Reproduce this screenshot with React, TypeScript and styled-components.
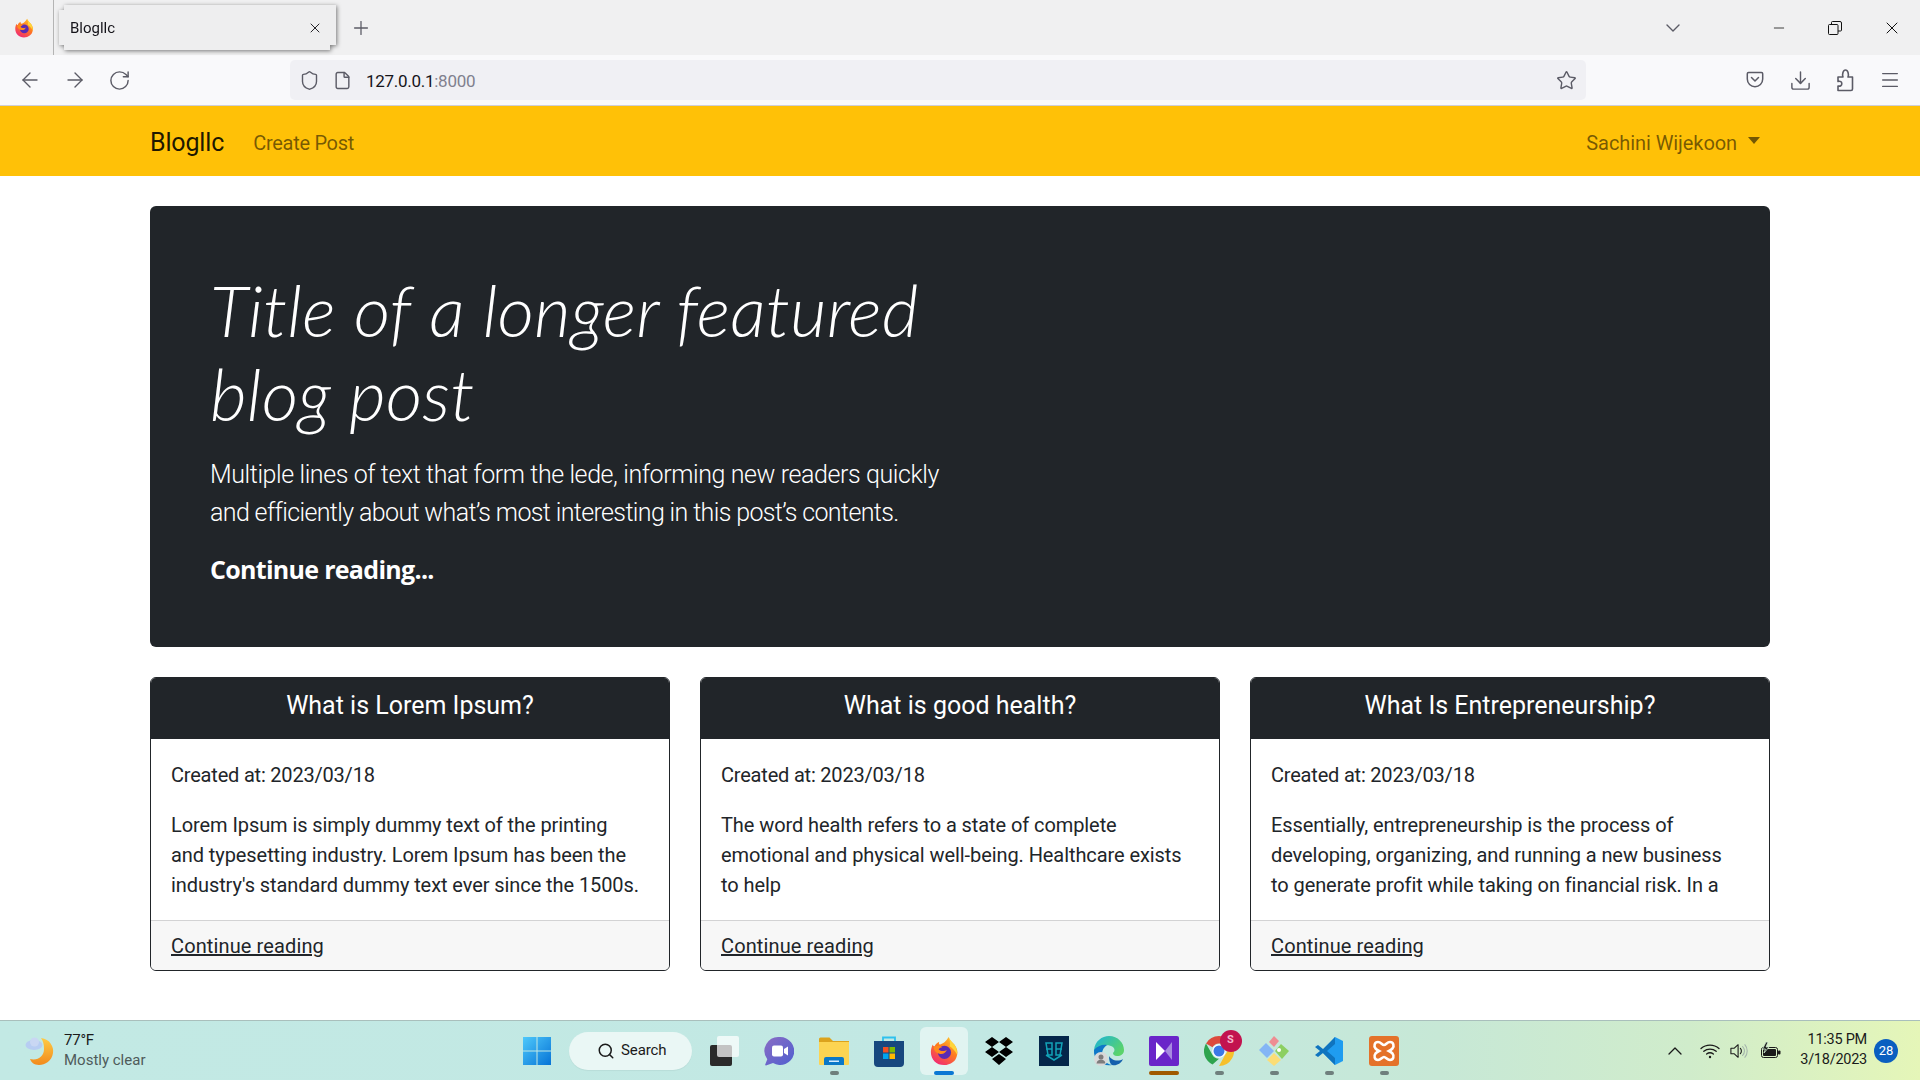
import styled, { createGlobalStyle } from 'styled-components';
import {
  ArrowLeft,
  ArrowRight,
  ChevronDown,
  ChevronUp,
  Download,
  File,
  Menu,
  Minus,
  Plus,
  RotateCw,
  Search,
  Shield,
  Star,
  X,
} from 'lucide-react';

const GlobalStyle = createGlobalStyle`
  html, body {
    height: 100%;
    margin: 0;
  }

  body {
    background: #fff;
    color: #212529;
    font-family: Roboto, "Liberation Sans", sans-serif;
    font-size: 20px;
    line-height: 1.5;
    overflow: hidden;
  }
`;

const Screen = styled.div`
  display: flex;
  flex-direction: column;
  height: 1080px;
  width: 1920px;
`;

/* browser chrome */

const TabStrip = styled.div`
  align-items: center;
  background: #f0f0f1;
  display: flex;
  height: 55px;
`;

const AppSlot = styled.div`
  align-items: center;
  border-right: 1px solid #b4b4b4;
  box-sizing: border-box;
  display: flex;
  height: 55px;
  justify-content: center;
  padding-right: 5px;
  width: 54px;
`;

const TabShadow = styled.div`
  align-self: flex-start;
  filter: drop-shadow(1px 1px 2px rgba(0, 0, 0, 0.5));
  margin-left: 5px;
  margin-top: 5px;
`;

const Tab = styled.div`
  align-items: center;
  background: #eeeeef;
  box-sizing: border-box;
  clip-path: polygon(0 5px, 5px 5px, 5px 0, 277px 0, 277px 40px, 271px 40px, 271px 45px, 5px 45px, 5px 40px, 0 40px);
  color: #15141a;
  display: flex;
  font-size: 15px;
  height: 45px;
  justify-content: space-between;
  padding: 0 13px 0 11px;
  width: 277px;
`;

const TabTitle = styled.span`
  margin-top: 2px;
`;

const NewTab = styled.div`
  color: #5b5b66;
  display: flex;
  margin-left: 14px;
`;

const WindowControls = styled.div`
  align-items: center;
  display: flex;
  margin-left: auto;
`;

const ListTabs = styled.div`
  color: #5b5b66;
  display: flex;
  margin-right: 66px;
`;

const WindowButton = styled.div`
  align-items: center;
  color: #111;
  display: flex;
  justify-content: center;
  width: 56.5px;
`;

const Toolbar = styled.div`
  align-items: center;
  background: #f9f9fb;
  border-bottom: 1px solid #cfcfd8;
  box-sizing: border-box;
  color: #5b5b66;
  display: flex;
  height: 51px;
`;

const NavButtons = styled.div`
  align-items: center;
  display: flex;
  gap: 21px;
  padding-left: 18px;
  width: 272px;
`;

const UrlBar = styled.div`
  align-items: center;
  background: #f0f0f4;
  border-radius: 5px;
  box-sizing: border-box;
  display: flex;
  height: 40px;
  padding: 0 9px;
  width: 1296px;
`;

const PageIcon = styled.span`
  display: flex;
  margin-left: 13px;
`;

const UrlText = styled.span`
  color: #15141a;
  font-size: 17px;
  letter-spacing: -0.28px;
  margin-left: 14px;
  margin-top: 3px;
`;

const UrlPort = styled.span`
  color: #80808e;
`;

const StarSlot = styled.span`
  display: flex;
  margin-left: auto;
`;

const ToolbarActions = styled.div`
  align-items: center;
  display: flex;
  margin-left: 146.5px;
`;

const ToolbarAction = styled.span`
  align-items: center;
  display: flex;
  justify-content: center;
  width: 45px;
`;

/* page */

const Navbar = styled.nav`
  align-items: center;
  background: #ffc107;
  box-sizing: border-box;
  display: flex;
  flex: none;
  height: 70px;
  padding: 4px 150px 0;
`;

const Brand = styled.a`
  color: rgba(0, 0, 0, 0.9);
  font-size: 25px;
  letter-spacing: -0.15px;
`;

const NavLink = styled.a`
  color: rgba(0, 0, 0, 0.55);
  font-size: 20px;
  letter-spacing: -0.28px;
  margin-left: 29px;
`;

const UserMenu = styled(NavLink)`
  align-items: center;
  display: flex;
  letter-spacing: -0.08px;
  margin-left: auto;
  margin-right: 10px;

  &::after {
    border-left: 6px solid transparent;
    border-right: 6px solid transparent;
    border-top: 7px solid rgba(0, 0, 0, 0.55);
    content: '';
    margin-bottom: 6px;
    margin-left: 11px;
  }
`;

const Main = styled.main`
  display: flex;
  flex: 1;
  flex-direction: column;
  gap: 30px;
  padding: 30px 150px 0;
`;

const Hero = styled.section`
  background: #212529;
  border-radius: 6px;
  box-sizing: border-box;
  color: #fff;
  height: 441px;
  padding: 62px 60px 0;
`;

const HeroCopy = styled.div`
  width: 750px;
`;

const HeroTitle = styled.h1`
  font-family: Lato, Roboto, sans-serif;
  font-size: 71px;
  font-style: italic;
  font-weight: 300;
  letter-spacing: 0.1px;
  line-height: 84px;
  margin: 0 0 20px;
`;

const Lede = styled.p`
  font-size: 25px;
  font-weight: 300;
  line-height: 37.5px;
  margin: 0 0 20px;
`;

const LedeLine = styled.span<{ $tracking: number }>`
  display: block;
  letter-spacing: ${(p) => p.$tracking}px;
  white-space: nowrap;
`;

const HeroLink = styled.a`
  color: #fff;
  display: block;
  font-family: "Open Sans", Roboto, sans-serif;
  font-size: 25px;
  font-weight: 700;
  letter-spacing: -0.7px;
  line-height: 37.5px;
`;

const CardGrid = styled.div`
  display: grid;
  gap: 30px;
  grid-template-columns: repeat(3, 1fr);
`;

const Card = styled.article`
  border: 1px solid #212529;
  border-radius: 6px;
  display: flex;
  flex-direction: column;
  height: 292px;
  overflow: hidden;
`;

const CardHeader = styled.h4`
  background: #212529;
  color: #fff;
  font-size: 25px;
  font-weight: 400;
  line-height: 30px;
  margin: 0;
  padding: 13px 20px 18px;
  text-align: center;
`;

const CardBody = styled.div`
  flex: 1;
  letter-spacing: -0.08px;
  padding: 21px 28px 0 20px;
`;

const CreatedLine = styled.p`
  letter-spacing: -0.2px;
  margin: 0 0 20px;
`;

const CardText = styled.p`
  margin: 0;
`;

const CardFooter = styled.div`
  background: #f7f7f7;
  border-top: 1px solid #d3d3d4;
  padding: 10px 20px 9px;
`;

const FooterLink = styled.a`
  color: #212529;
  letter-spacing: 0.12px;
  text-decoration: underline;
`;

/* taskbar */

const Taskbar = styled.footer`
  align-items: center;
  background: linear-gradient(90deg, #c2e9e4 0%, #c2e8e3 55%, #c7e8d6 75%, #d0eccb 88%, #e5f6b8 100%);
  border-top: 1px solid #a9bfbc;
  box-sizing: border-box;
  display: flex;
  flex: none;
  height: 60px;
  padding-left: 24px;
`;

const Weather = styled.div`
  align-items: center;
  display: flex;
  gap: 10px;
  width: 485.5px;
`;

const WeatherText = styled.div`
  color: #1a1a1a;
  font-size: 15px;
  letter-spacing: -0.2px;
  line-height: 20px;
  margin-top: -2px;
`;

const Muted = styled.div`
  color: #4f5b5a;
  letter-spacing: 0;
`;

const Slot = styled.div<{ $active?: boolean }>`
  align-items: center;
  background: ${(p) => (p.$active ? 'rgba(255, 255, 255, 0.5)' : 'transparent')};
  border-radius: 6px;
  display: flex;
  height: 48px;
  justify-content: center;
  margin: ${(p) => (p.$active ? '0 3.5px' : '0')};
  position: relative;
  width: ${(p) => (p.$active ? '48px' : '55px')};
`;

const Indicator = styled.span<{ $color: string; $width: number }>`
  background: ${(p) => p.$color};
  border-radius: 2px;
  bottom: 0;
  height: 4px;
  left: 50%;
  margin-left: ${(p) => -p.$width / 2}px;
  position: absolute;
  width: ${(p) => p.$width}px;
`;

const SearchPill = styled.div`
  align-items: center;
  background: #eaf7f5;
  border-radius: 19px;
  box-shadow: 0 1px 1px rgba(0, 0, 0, 0.05);
  box-sizing: border-box;
  color: #1a1a1a;
  display: flex;
  font-size: 15px;
  gap: 6px;
  height: 38px;
  letter-spacing: -0.1px;
  margin: 0 4.5px;
  padding-left: 28px;
  width: 123px;
`;

const Tray = styled.div`
  align-items: center;
  color: #1a1a1a;
  display: flex;
  margin-left: auto;
  padding-right: 22px;
`;

const TrayIcons = styled.div`
  align-items: center;
  display: flex;
  margin-right: 8px;
`;

const TrayIcon = styled.span<{ $width: number }>`
  display: flex;
  justify-content: center;
  width: ${(p) => p.$width}px;
`;

const Clock = styled.div`
  font-size: 14.5px;
  letter-spacing: -0.25px;
  line-height: 20px;
  margin-top: -2px;
  text-align: right;
`;

const Badge = styled.span`
  align-items: center;
  background: #0a5fc0;
  border-radius: 50%;
  color: #fff;
  display: flex;
  font-size: 13px;
  height: 24px;
  justify-content: center;
  margin-left: 7px;
  width: 24px;
`;

const ProfileBadge = styled.span`
  align-items: center;
  background: #c2134f;
  border-radius: 50%;
  color: #f6b8cd;
  display: flex;
  font-size: 11px;
  font-weight: 700;
  height: 22px;
  justify-content: center;
  position: absolute;
  right: 5px;
  top: 3px;
  width: 22px;
`;

const posts = [
  {
    title: 'What is Lorem Ipsum?',
    text: "Lorem Ipsum is simply dummy text of the printing and typesetting industry. Lorem Ipsum has been the industry's standard dummy text ever since the 1500s.",
  },
  {
    title: 'What is good health?',
    text: 'The word health refers to a state of complete emotional and physical well-being. Healthcare exists to help',
  },
  {
    title: 'What Is Entrepreneurship?',
    text: 'Essentially, entrepreneurship is the process of developing, organizing, and running a new business to generate profit while taking on financial risk. In a',
  },
];

const Firefox = ({ size, id }: { size: number; id: string }) => (
  <svg width={size} height={size} viewBox="0 0 32 32">
    <defs>
      <linearGradient id={id} x1="0.8" y1="0" x2="0.2" y2="1">
        <stop offset="0" stopColor="#ffc22e" />
        <stop offset="0.45" stopColor="#ff7a1e" />
        <stop offset="1" stopColor="#f0247a" />
      </linearGradient>
    </defs>
    <path
      d="M21 1c1 3 3 5 6 8 3 4 4 8 3 11-1 7-7 11-14 11C8 31 2 25 2 17c0-3 1-6 2-8 0 1 1 2 2 2 1-3 3-4 5-5-1 2 0 3 1 3 3-1 6-3 9-8z"
      fill={`url(#${id})`}
    />
    <path d="M21 1c1 3 3 5 6 8 3 4 3 8 3 11-2-4-5-7-8-9 1-3 0-7-1-10z" fill="#ffd43a" />
    <circle cx="16.5" cy="17.5" r="7" fill="#5a2bb3" />
    <path d="M5 12c3-2 6-2 9 0-2 0-3 1-4 2 2 2 6 3 9 1-1 3-4 5-8 4-4-1-6-4-6-7z" fill="#ff8a1d" />
  </svg>
);

const Pocket = () => (
  <svg width="20" height="20" viewBox="0 0 20 20" fill="none" stroke="#5b5b66" strokeWidth="1.5">
    <path d="M3.5 2.5h13a1.2 1.2 0 0 1 1.2 1.2V9a7.7 7.7 0 0 1-15.4 0V3.7a1.2 1.2 0 0 1 1.2-1.2z" />
    <path d="M6.5 7.5 10 11l3.5-3.5" strokeLinecap="round" strokeLinejoin="round" />
  </svg>
);

const Extensions = () => (
  <svg width="20" height="24" viewBox="0 0 20 24" fill="none" stroke="#5b5b66" strokeWidth="1.6" strokeLinejoin="round">
    <path d="M3 22.500V18c2.400.6 3.800-.6 3.800-2.300S5.400 12.800 3 13.500V9h5C7 6.500 8 2 10.500 2s3.500 4.500 2.500 7h4.500v12a1.500 1.500 0 0 1-1.500 1.500z" />
  </svg>
);

const Restore = () => (
  <svg width="14" height="14" viewBox="0 0 14 14" fill="none" stroke="#111" strokeWidth="1">
    <rect x="0.5" y="3.500" width="9.500" height="10" rx="1" />
    <path d="M3.500 3.500V1.500a1 1 0 0 1 1-1h7.500a1.500 1.500 0 0 1 1.500 1.500v7a1 1 0 0 1-1 1H10" />
  </svg>
);

const WeatherIcon = () => (
  <svg width="30" height="30" viewBox="0 0 30 30">
    <defs>
      <linearGradient id="moon" x1="0" y1="0" x2="0" y2="1">
        <stop offset="0" stopColor="#ffcb45" />
        <stop offset="1" stopColor="#f28a1c" />
      </linearGradient>
    </defs>
    <path d="M17 2C26 3 30 11 29 17 28 25 21 29 15 29 10 29 7 26 6 23 14 25 20 20 20 13 20 8 19 5 17 2z" fill="url(#moon)" />
    <ellipse cx="10" cy="9" rx="8.500" ry="5" fill="#b7cdf2" />
    <circle cx="10.500" cy="6" r="4.500" fill="#c9d7f3" />
  </svg>
);

const WindowsLogo = () => (
  <svg width="30" height="30" viewBox="0 0 30 30">
    <defs>
      <linearGradient id="win" x1="0" y1="0" x2="1" y2="1">
        <stop offset="0" stopColor="#4fc9fb" />
        <stop offset="1" stopColor="#0673d6" />
      </linearGradient>
    </defs>
    <path d="M1 1h13.500v13.500H1zM15.500 1H29v13.500H15.500zM1 15.500h13.500V29H1zM15.500 15.500H29V29H15.500z" fill="url(#win)" />
  </svg>
);

const TaskView = () => (
  <svg width="32" height="32" viewBox="0 0 32 32">
    <rect x="2" y="10" width="22" height="21" rx="2" fill="#2a2a2a" />
    <rect x="9" y="1" width="22" height="21" rx="2" fill="#fff" fillOpacity="0.72" />
  </svg>
);

const Meet = () => (
  <svg width="30" height="30" viewBox="0 0 30 30">
    <defs>
      <linearGradient id="meet" x1="0" y1="0" x2="1" y2="1">
        <stop offset="0" stopColor="#8a6cc4" />
        <stop offset="1" stopColor="#4f5fd0" />
      </linearGradient>
    </defs>
    <path d="M16 1a14 14 0 1 1-7 26l-7 2.500c-.8 0-1-.6-.7-1.200l2-5A14 14 0 0 1 16 1z" fill="url(#meet)" />
    <rect x="8" y="9.500" width="11" height="11" rx="2" fill="#fff" />
    <path d="m20 13 4-2.500v9L20 17z" fill="#fff" />
  </svg>
);

const Folder = () => (
  <svg width="30" height="30" viewBox="0 0 30 30">
    <path d="M0 3a1.500 1.500 0 0 1 1.500-1.500h9L14 5h16v4H0z" fill="#dca31d" />
    <path d="M0 6h30v22a1 1 0 0 1-1 1H1a1 1 0 0 1-1-1z" fill="#fcd452" />
    <path d="M5 23a2 2 0 0 1 2-2h16a2 2 0 0 1 2 2v6H5z" fill="#0a78c8" />
    <rect x="10" y="24.500" width="10" height="1.500" fill="#d6ecff" />
  </svg>
);

const Store = () => (
  <svg width="30" height="32" viewBox="0 0 30 32">
    <path d="M9 7V2.500h12V7" fill="none" stroke="#2ec1ee" strokeWidth="1.800" />
    <path d="M0 6h30v22a4 4 0 0 1-4 4H4a4 4 0 0 1-4-4z" fill="#17477e" />
    <rect x="9" y="12" width="5.500" height="5.500" fill="#f25022" />
    <rect x="15.500" y="12" width="5.500" height="5.500" fill="#7fba00" />
    <rect x="9" y="18.500" width="5.500" height="5.500" fill="#00a4ef" />
    <rect x="15.500" y="18.500" width="5.500" height="5.500" fill="#ffb900" />
  </svg>
);

const Dropbox = () => (
  <svg width="30" height="30" viewBox="0 0 30 30" fill="#000">
    <path d="m8 1 7 5-7 5-7-5zM22 1l7 5-7 5-7-5zM8 11l7 5-7 5-7-5zM22 11l7 5-7 5-7-5zM15 18l7 5-7 6-7-6z" />
  </svg>
);

const ShieldApp = () => (
  <svg width="30" height="30" viewBox="0 0 30 30">
    <rect width="30" height="30" fill="#04264a" />
    <path d="M7 7h6v12H9zM17 7h6l-2 12h-4zM7 19l8 5 8-5" fill="none" stroke="#12a3b8" strokeWidth="1.500" />
    <path d="M7 13h6M17 13h6" stroke="#12a3b8" strokeWidth="1.500" />
  </svg>
);

const Edge = () => (
  <svg width="32" height="32" viewBox="0 0 32 32">
    <defs>
      <linearGradient id="edge1" x1="0" y1="0" x2="1" y2="0.6">
        <stop offset="0" stopColor="#1bb3da" />
        <stop offset="1" stopColor="#5ad36b" />
      </linearGradient>
    </defs>
    <path d="M1 15C2 6 9 1 16 1c9 0 15 7 15 14 0 4-3 6-7 6-3 0-4-2-4-3 2-2 2-4 0-6-4-3-11-2-15 1-2 1-3 2-4 2z" fill="url(#edge1)" />
    <path d="M1 15c3-4 9-6 13-5-3 2-5 5-5 9 0 5 4 10 10 11-9 2-19-5-18-15z" fill="#0f78c8" />
    <path d="M19 30c4 1 9-1 11-6-3 2-8 2-11 0-2-1-3-3-3-3 0 4 1 8 3 9z" fill="#1560ad" />
    <circle cx="8" cy="24" r="7" fill="#d9d9d9" />
    <circle cx="8" cy="22" r="2.500" fill="#7d7d7d" />
    <path d="M3.500 28.500c.5-3 2.500-4 4.500-4s4 1 4.500 4z" fill="#7d7d7d" />
  </svg>
);

const VisualStudio = () => (
  <svg width="30" height="30" viewBox="0 0 30 30">
    <rect width="30" height="30" rx="2" fill="#6a25c9" />
    <path d="M7 6v18l9-9z" fill="#fff" />
    <path d="M23 6v18l-7-9z" fill="#a78ae0" />
  </svg>
);

const Chrome = () => (
  <svg width="30" height="36" viewBox="0 0 30 36">
    <path d="M15 3a15 15 0 0 1 13 7.500H15a7.500 7.500 0 0 0-6.500 3.800L2 10.500A15 15 0 0 1 15 3z" fill="#dd4a3d" />
    <path d="M2 10.500 8.500 22a7.500 7.500 0 0 0 6.500 3.800L8.500 31.600A15 15 0 0 1 2 10.500z" fill="#2da44e" />
    <path d="M28 10.500a15 15 0 0 1-13 22.500l6-11a7.500 7.500 0 0 0 0-11.500z" fill="#f6c02c" />
    <circle cx="15" cy="18" r="6.800" fill="#fff" />
    <circle cx="15" cy="18" r="5.500" fill="#3b78e7" />
  </svg>
);

const Kraken = () => (
  <svg width="30" height="30" viewBox="0 0 30 30">
    <path d="m7 8 8 8-7 7-8-8z" fill="#84b5f5" transform="translate(0 -1)" />
    <path d="m15 0 5 5-5 6-5-5z" fill="#ee8d92" />
    <path d="m22 8 8 7-7 8-7-8z" fill="#8ccf62" />
    <path d="m15 17 7 7-7 6-7-6z" fill="#fbdd76" />
    <circle cx="20" cy="14" r="2" fill="#fff" />
  </svg>
);

const VSCode = () => (
  <svg width="30" height="30" viewBox="0 0 30 30">
    <path d="M21 1 29 5v20l-8 4-13-13z" fill="#1f9cf0" />
    <path d="M21 1 9 13 4 9 1 11l5 4-5 4 3 2 5-4 12 12v-7l-8-7 8-7z" fill="#0f74bf" />
  </svg>
);

const Xampp = () => (
  <svg width="30" height="30" viewBox="0 0 30 30">
    <rect width="30" height="30" rx="3" fill="#e4722a" />
    <path
      d="M9 6c3 0 4 3 6 3s3-3 6-3c3.500 0 4.500 4 2.500 6.500C22 14 20 15 20 15s2 1 3.500 2.500c2 2.500 1 6.500-2.500 6.500-3 0-4-3-6-3s-3 3-6 3c-3.500 0-4.500-4-2.500-6.500C8 16 10 15 10 15s-2-1-3.500-2.500C4.500 10 5.500 6 9 6z"
      fill="none"
      stroke="#fff"
      strokeWidth="2.600"
    />
  </svg>
);

const Wifi = () => (
  <svg width="20" height="16" viewBox="0 0 20 16" fill="none" stroke="#1a1a1a" strokeWidth="1.300" strokeLinecap="round">
    <path d="M1 5.500c5-4.600 13-4.600 18 0M3.800 8.300c3.500-3 8.900-3 12.400 0M6.600 11c2-1.500 4.800-1.500 6.800 0" />
    <circle cx="10" cy="14" r="1.200" fill="#1a1a1a" stroke="none" />
  </svg>
);

const Speaker = () => (
  <svg width="20" height="18" viewBox="0 0 20 18" fill="none" stroke="#1a1a1a" strokeWidth="1.200" strokeLinejoin="round">
    <path d="M1 6h3.500L9 2v14l-4.500-4H1z" />
    <path d="M11.500 6c1.500 1.500 1.500 4.500 0 6" strokeLinecap="round" />
    <path d="M14 4c2.500 3 2.500 7 0 10M16.500 2c3.500 4 3.500 10 0 14" stroke="#a5b5ad" strokeLinecap="round" />
  </svg>
);

const Battery = () => (
  <svg width="21" height="18" viewBox="0 0 21 18">
    <rect x="1.500" y="5.500" width="16" height="10" rx="2" fill="none" stroke="#1a1a1a" />
    <rect x="3" y="7" width="13" height="7" rx="1" fill="#1a1a1a" />
    <rect x="18" y="8.500" width="2.500" height="4" rx="1" fill="#1a1a1a" />
    <path d="M6 0 2.500 7h3L4 11l5-6H6l2-5z" fill="#1a1a1a" stroke="#cde9cf" strokeWidth="0.800" />
  </svg>
);

export default function App() {
  return (
    <Screen>
      <GlobalStyle />

      <TabStrip>
        <AppSlot>
          <Firefox size={20} id="ff-small" />
        </AppSlot>
        <TabShadow>
          <Tab>
            <TabTitle>Blogllc</TabTitle>
            <X size={16} strokeWidth={1.4} />
          </Tab>
        </TabShadow>
        <NewTab>
          <Plus size={22} strokeWidth={1.4} />
        </NewTab>
        <WindowControls>
          <ListTabs>
            <ChevronDown size={24} strokeWidth={1.4} />
          </ListTabs>
          <WindowButton>
            <Minus size={16} strokeWidth={1.2} />
          </WindowButton>
          <WindowButton>
            <Restore />
          </WindowButton>
          <WindowButton>
            <X size={20} strokeWidth={1.2} />
          </WindowButton>
        </WindowControls>
      </TabStrip>

      <Toolbar>
        <NavButtons>
          <ArrowLeft size={24} strokeWidth={1.4} />
          <ArrowRight size={24} strokeWidth={1.4} />
          <RotateCw size={23} strokeWidth={1.5} />
        </NavButtons>
        <UrlBar>
          <Shield size={21} strokeWidth={1.6} />
          <PageIcon>
            <File size={19} strokeWidth={1.8} />
          </PageIcon>
          <UrlText>
            127.0.0.1<UrlPort>:8000</UrlPort>
          </UrlText>
          <StarSlot>
            <Star size={21} strokeWidth={1.6} />
          </StarSlot>
        </UrlBar>
        <ToolbarActions>
          <ToolbarAction>
            <Pocket />
          </ToolbarAction>
          <ToolbarAction>
            <Download size={23} strokeWidth={1.5} />
          </ToolbarAction>
          <ToolbarAction>
            <Extensions />
          </ToolbarAction>
          <ToolbarAction>
            <Menu size={22} strokeWidth={1.5} />
          </ToolbarAction>
        </ToolbarActions>
      </Toolbar>

      <Navbar>
        <Brand>Blogllc</Brand>
        <NavLink>Create Post</NavLink>
        <UserMenu>Sachini Wijekoon</UserMenu>
      </Navbar>

      <Main>
        <Hero>
          <HeroCopy>
            <HeroTitle>Title of a longer featured blog post</HeroTitle>
            <Lede>
              <LedeLine $tracking={-0.41}>
                Multiple lines of text that form the lede, informing new readers quickly
              </LedeLine>
              <LedeLine $tracking={-0.63}>and efficiently about what’s most interesting in this post’s contents.</LedeLine>
            </Lede>
            <HeroLink>Continue reading...</HeroLink>
          </HeroCopy>
        </Hero>

        <CardGrid>
          {posts.map(({ title, text }) => (
            <Card key={title}>
              <CardHeader>{title}</CardHeader>
              <CardBody>
                <CreatedLine>Created at: 2023/03/18</CreatedLine>
                <CardText>{text}</CardText>
              </CardBody>
              <CardFooter>
                <FooterLink>Continue reading</FooterLink>
              </CardFooter>
            </Card>
          ))}
        </CardGrid>
      </Main>

      <Taskbar>
        <Weather>
          <WeatherIcon />
          <WeatherText>
            77°F
            <Muted>Mostly clear</Muted>
          </WeatherText>
        </Weather>
        <Slot>
          <WindowsLogo />
        </Slot>
        <SearchPill>
          <Search size={18} strokeWidth={2} />
          Search
        </SearchPill>
        <Slot>
          <TaskView />
        </Slot>
        <Slot>
          <Meet />
        </Slot>
        <Slot>
          <Folder />
          <Indicator $color="#6f7f7d" $width={9} />
        </Slot>
        <Slot>
          <Store />
        </Slot>
        <Slot $active>
          <Firefox size={30} id="ff-large" />
          <Indicator $color="#0a78d4" $width={20} />
        </Slot>
        <Slot>
          <Dropbox />
        </Slot>
        <Slot>
          <ShieldApp />
        </Slot>
        <Slot>
          <Edge />
        </Slot>
        <Slot>
          <VisualStudio />
          <Indicator $color="#a05a00" $width={30} />
        </Slot>
        <Slot>
          <Chrome />
          <ProfileBadge>S</ProfileBadge>
          <Indicator $color="#6f7f7d" $width={9} />
        </Slot>
        <Slot>
          <Kraken />
          <Indicator $color="#6f7f7d" $width={9} />
        </Slot>
        <Slot>
          <VSCode />
          <Indicator $color="#6f7f7d" $width={9} />
        </Slot>
        <Slot>
          <Xampp />
          <Indicator $color="#6f7f7d" $width={9} />
        </Slot>
        <Tray>
          <TrayIcons>
            <TrayIcon $width={30}>
              <ChevronUp size={24} strokeWidth={1.3} />
            </TrayIcon>
            <TrayIcon $width={40}>
              <Wifi />
            </TrayIcon>
            <TrayIcon $width={18}>
              <Speaker />
            </TrayIcon>
            <TrayIcon $width={44}>
              <Battery />
            </TrayIcon>
          </TrayIcons>
          <Clock>
            11:35 PM
            <br />
            3/18/2023
          </Clock>
          <Badge>28</Badge>
        </Tray>
      </Taskbar>
    </Screen>
  );
}
